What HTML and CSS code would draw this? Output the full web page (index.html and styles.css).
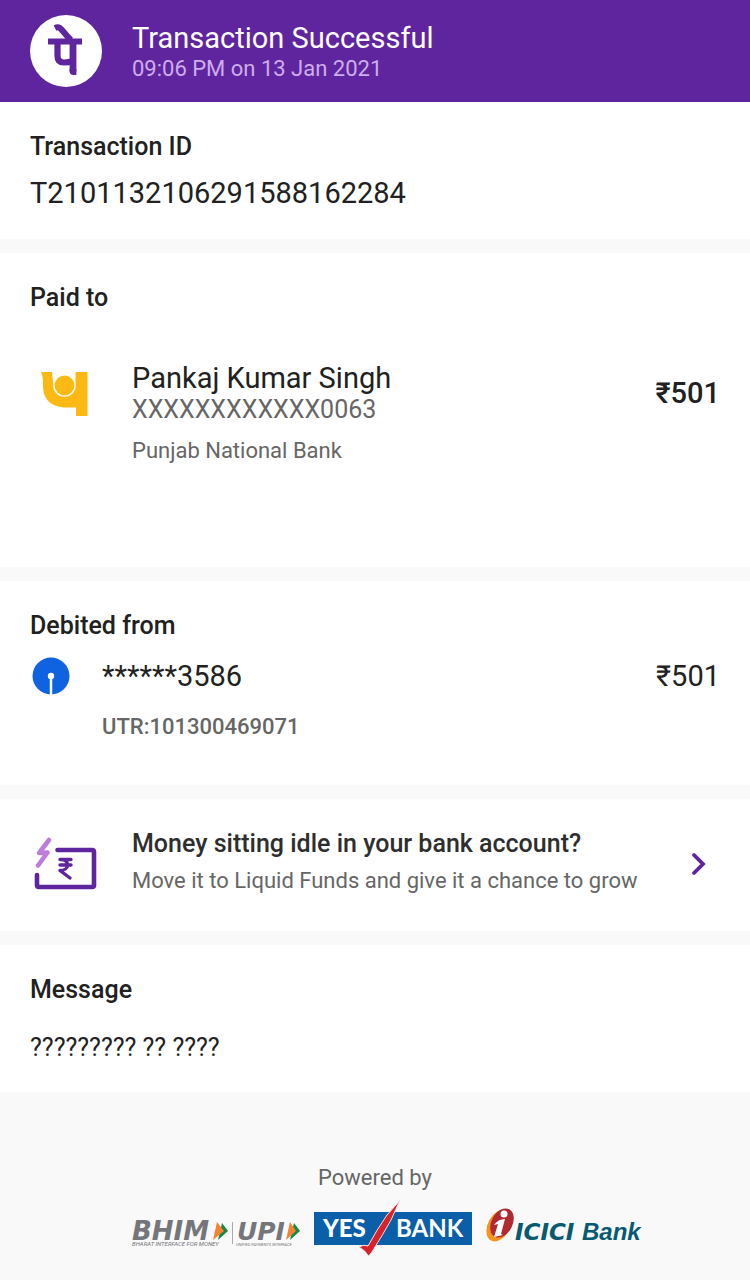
FILE: index.html
```html
<!DOCTYPE html>
<html lang="en">
<head>
<meta charset="utf-8">
<meta name="viewport" content="width=device-width, initial-scale=1">
<title>Transaction Successful</title>
<link rel="stylesheet" href="styles.css">
</head>
<body>
<header class="header">
  <svg class="header-logo" viewBox="0 0 72 72" role="img" aria-label="PhonePe">
    <circle cx="36" cy="36" r="36" fill="#fff"/>
    <g fill="none" stroke="#5f259f">
      <path d="M18 26.500H52" stroke-width="5.800"/>
      <path d="M25 13C31 10 32 17 41 25" stroke-width="6"/>
      <path d="M27.500 26V41Q27.500 47.500 34 47.500Q39 47.500 43 46" stroke-width="6.200"/>
      <path d="M43 26V56.500" stroke-width="6.800"/>
    </g>
    <path d="M39.600 54H46.400V60H43.500Q39.600 60 39.600 56Z" fill="#5f259f"/>
  </svg>
  <div>
    <h1 class="header-title">Transaction Successful</h1>
    <p class="header-date">09:06 PM on 13 Jan 2021</p>
  </div>
</header>

<main class="sections">
  <section class="section section-id">
    <h2 class="label">Transaction ID</h2>
    <p class="value">T2101132106291588162284</p>
  </section>

  <section class="section section-paid">
    <h2 class="label">Paid to</h2>
    <div class="payee">
      <svg class="payee-logo" viewBox="0 3 72 64" aria-hidden="true">
        <path d="M11 14H22L23 24A11.500 11.500 0 0 0 45.500 24V14H57.500V58H46V49.500H37C20 49.500 12 40 13 25Q13 18 11 14Z" fill="#fdb913"/>
        <circle cx="34.500" cy="27.500" r="11.300" fill="#fff"/>
        <circle cx="34.500" cy="27.500" r="9.900" fill="#fdb913"/>
      </svg>
      <div>
        <p class="value">Pankaj Kumar Singh</p>
        <p class="account">XXXXXXXXXXXX0063</p>
      </div>
      <p class="value amount-strong">₹501</p>
      <p class="note payee-bank">Punjab National Bank</p>
    </div>
  </section>

  <section class="section section-debit">
    <h2 class="label">Debited from</h2>
    <div class="debit">
      <svg class="debit-logo" viewBox="0 0 42 38" aria-hidden="true">
        <circle cx="21" cy="19" r="18.500" fill="#0f62e0"/>
        <path d="M21 19V38" stroke="#fff" stroke-width="2.500"/>
        <circle cx="21" cy="19" r="3.200" fill="#fff"/>
      </svg>
      <p class="value">******3586</p>
      <p class="value">₹501</p>
      <p class="note note-strong debit-utr">UTR:101300469071</p>
    </div>
  </section>

  <a class="section promo" href="#funds">
    <svg class="promo-icon" viewBox="0 0 72 72" aria-hidden="true">
      <g fill="none" stroke-linecap="round" stroke-linejoin="round">
        <path d="M27.500 21H62Q64 21 64 23V56Q64 58 62 58H9Q7 58 7 56V46" stroke="#5f259f" stroke-width="4.600"/>
        <path d="M19 11L9 24L17.500 23.500L8 36.500" stroke="#bd7ddb" stroke-width="4.600"/>
        <path d="M30 30.500H41M30 36H41M31 30.500C40 30.500 40 41.500 30 41.500L40 49" stroke="#5f259f" stroke-width="3.400"/>
      </g>
    </svg>
    <span class="promo-text">
      <span class="promo-title">Money sitting idle in your bank account?</span>
      <span class="note">Move it to Liquid Funds and give it a chance to grow</span>
    </span>
    <svg class="chevron" viewBox="0 0 16 30" aria-hidden="true">
      <path d="M3 9L12 18L3 27" fill="none" stroke="#5f259f" stroke-width="3.800" stroke-linecap="round"/>
    </svg>
  </a>

  <section class="section section-message">
    <h2 class="label">Message</h2>
    <p class="message">????????? ?? ????</p>
  </section>
</main>

<footer class="footer">
  <p class="note">Powered by</p>
  <div class="partners">
    <svg class="partner-upi" viewBox="0 0 169 56" role="img" aria-label="BHIM UPI">
      <g class="wide" fill="#757679">
        <text x="1" y="40" font-size="26">BHIM</text>
        <text x="106" y="40" font-size="25">UPI</text>
      </g>
      <g class="tagline" fill="#757679">
        <text x="1" y="46" font-size="6">BHARAT INTERFACE FOR MONEY</text>
        <text x="105" y="46" font-size="4">UNIFIED PAYMENTS INTERFACE</text>
      </g>
      <path d="M101.500 22V44" stroke="#aaa"/>
      <path d="M91 23L97 31L87 40Z" fill="#168944"/>
      <path d="M86 22L93 31L82 40Z" fill="#f58233"/>
      <path d="M163 23L169 31L159 40Z" fill="#168944"/>
      <path d="M159 22L165 31L155 40Z" fill="#f58233"/>
    </svg>
    <svg class="partner-yes" viewBox="0 0 158 62" role="img" aria-label="YES BANK">
      <path d="M0 12H158V45H0Z" fill="#0a5fa8"/>
      <path d="M85.500 1L73 15Q62 31 54 46Q50 44 45 47Q51 50 54.500 56Q57 54 61 47Q68 36 77 20Z" fill="#da2128" stroke="#f3dfe6" stroke-width="1"/>
      <g class="lato" fill="#fff" font-size="24">
        <text x="9" y="37" font-weight="900">YES</text>
        <text x="82" y="37" font-weight="700">BANK</text>
      </g>
    </svg>
    <svg class="partner-icici" viewBox="0 0 157 56" role="img" aria-label="ICICI Bank">
      <ellipse cx="13" cy="25.500" rx="11" ry="17" transform="rotate(28 13 25.500)" fill="#f7941d"/>
      <ellipse cx="16" cy="23" rx="10.500" ry="15.500" transform="rotate(28 16 23)" fill="#b02a30"/>
      <circle cx="18" cy="14" r="3.500" fill="#fff"/>
      <path d="M8 25Q12 19 19 19L15 34L17 35L8 37L12 24Z" fill="#fff"/>
      <g fill="#075a70">
        <text class="wide" x="29" y="40" font-size="23">ICICI</text>
        <text class="arial" x="96" y="40" font-size="24">Bank</text>
      </g>
    </svg>
  </div>
</footer>
</body>
</html>
```
FILE: styles.css
```css
* {
  box-sizing: border-box;
}

body {
  margin: 0;
  background: #f9f9f9;
  color: #212121;
  font-family: Roboto, "Noto Sans", sans-serif;
}

h1,
h2,
p {
  margin: 0;
}

svg {
  display: block;
  flex: none;
}

.header {
  display: flex;
  align-items: center;
  gap: 30px;
  padding: 15px 30px;
  background: #5f259f;
  color: #fff;
}

.header-logo {
  width: 72px;
  height: 72px;
}

.header-title {
  padding-top: 2px;
  font-size: 29px;
  line-height: 34px;
  font-weight: 400;
}

.header-date {
  font-size: 22px;
  line-height: 28px;
  color: #cdadec;
}

.sections {
  display: grid;
  gap: 14px;
}

.section {
  padding: 28px 30px;
  background: #fff;
}

.section-id {
  padding-bottom: 29px;
}

.section-paid {
  padding-bottom: 102px;
}

.section-debit {
  padding-bottom: 44px;
}

.label,
.promo-title {
  font-size: 25px;
  line-height: 34px;
  font-weight: 500;
}

.value {
  font-size: 29px;
  line-height: 34px;
}

.amount-strong {
  font-weight: 500;
}

.section-id .value {
  margin-top: 12px;
}

.account {
  font-size: 25px;
  line-height: 30px;
  color: #666;
}

.note {
  font-size: 22px;
  line-height: 28px;
  color: #666;
}

.note-strong {
  font-weight: 500;
}

.payee {
  display: grid;
  grid-template-columns: 72px 1fr auto;
  align-items: center;
  gap: 12px 30px;
  margin-top: 46px;
}

.payee-logo {
  width: 72px;
  height: 64px;
}

.payee-bank,
.debit-utr {
  grid-column: 2 / -1;
}

.debit {
  display: grid;
  grid-template-columns: 42px 1fr auto;
  align-items: center;
  gap: 18px 30px;
  margin-top: 14px;
}

.debit-logo {
  width: 42px;
  height: 38px;
}

.promo {
  display: flex;
  align-items: center;
  gap: 30px;
  padding-bottom: 36px;
  color: inherit;
  text-decoration: none;
}

.promo-icon {
  width: 72px;
  height: 72px;
  margin-bottom: -8px;
}

.promo-title {
  color: #2e2e2e;
}

.promo-text {
  display: grid;
  flex: 1;
  gap: 6px;
}

.chevron {
  width: 16px;
  height: 30px;
  margin-right: 13px;
}

.section-message {
  padding-bottom: 27px;
}

.message {
  margin-top: 24px;
  font-size: 25px;
  line-height: 34px;
}

.footer {
  padding: 72px 0 18px;
  text-align: center;
}

.partners {
  display: flex;
  justify-content: center;
  gap: 14px;
  padding-left: 24px;
  margin-top: 8px;
}

.partner-upi {
  width: 169px;
  height: 56px;
}

.partner-yes {
  width: 158px;
  height: 62px;
}

.partner-icici {
  width: 157px;
  height: 56px;
}

.wide {
  font-family: "DejaVu Sans", sans-serif;
  font-weight: 700;
  font-style: italic;
}

.tagline {
  font-family: Roboto, sans-serif;
  font-style: italic;
}

.lato {
  font-family: Lato, sans-serif;
}

.arial {
  font-family: "Liberation Sans", Arial, sans-serif;
  font-weight: 700;
  font-style: italic;
}
```
